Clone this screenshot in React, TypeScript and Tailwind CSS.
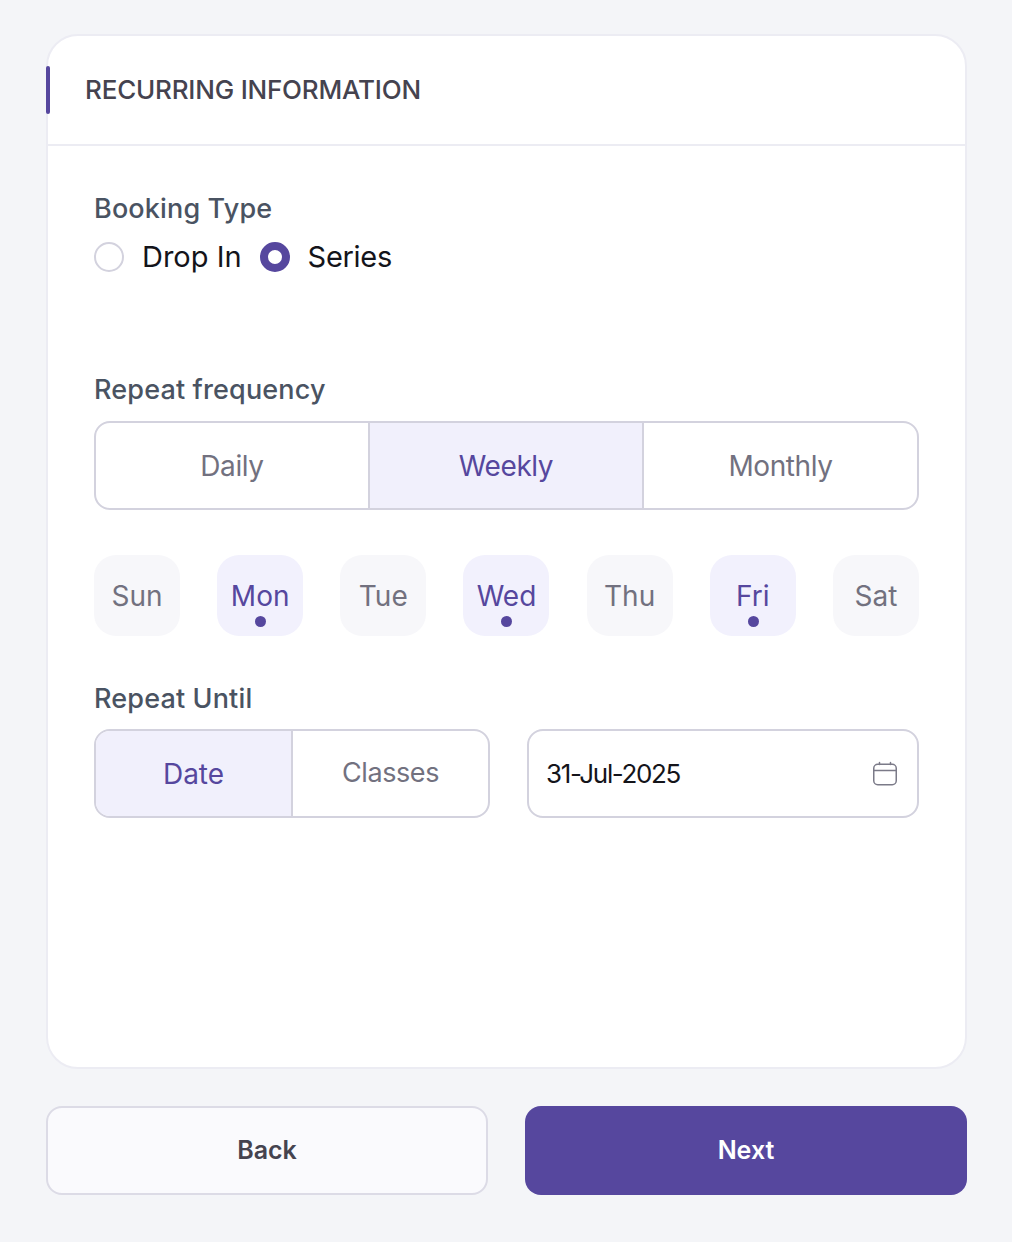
const DAYS = [
  { label: 'Sun', on: false },
  { label: 'Mon', on: true },
  { label: 'Tue', on: false },
  { label: 'Wed', on: true },
  { label: 'Thu', on: false },
  { label: 'Fri', on: true },
  { label: 'Sat', on: false },
];

function CalendarIcon() {
  return (
    <svg width="26" height="26" viewBox="0 0 26 26" fill="none" stroke="#7b7a88" strokeWidth="1.5" strokeLinecap="round">
      <rect x="1.75" y="3.25" width="22.5" height="20.5" rx="4" />
      <path d="M2 9.5h22M7.5 1.5v2M18.5 1.5v2" />
    </svg>
  );
}

function Segment({ label, active, className }: { label: string; active?: boolean; className: string }) {
  return (
    <div
      className={
        active
          ? `flex items-center justify-center bg-[#f1f0fc] text-[#56479e] ${className}`
          : `flex items-center justify-center text-[#72717f] ${className}`
      }
    >
      {label}
    </div>
  );
}

function Label({ children }: { children: string }) {
  return <div className="text-[27px] leading-[36px] font-medium text-[#4a5362] tracking-[0.15px]">{children}</div>;
}

export default function App() {
  return (
    <div className="w-[1012px] h-[1242px] bg-[#f4f5f8] pl-[46px] pr-[45px] pt-[34px] text-[30px] font-['Inter',sans-serif]">
      <div className="h-[1035px] bg-white rounded-[32px] border-2 border-[#eceCf3]">
        <div className="relative h-[110px] border-b-2 border-[#eceCf3] flex items-center pl-[37px] pb-[2px]">
          <div className="absolute left-[-2px] top-[30px] w-[4px] h-[48px] rounded-[2px] bg-[#56479e]" />
          <span className="text-[26px] font-medium text-[#45434f] tracking-[-0.2px]">RECURRING INFORMATION</span>
        </div>

        <div className="px-[46px]">
          <div className="pt-[45px]">
            <Label>Booking Type</Label>
            <div className="flex items-center h-[30px] mt-[15px] text-[#14141a] text-[29px] leading-[30px]">
              <div className="w-[30px] h-[30px] rounded-full border-2 border-[#d3d2de] bg-white" />
              <span className="ml-[18px]">Drop In</span>
              <div className="ml-[18px] w-[30px] h-[30px] rounded-full border-[8px] border-[#56479e] bg-white" />
              <span className="ml-[18px] tracking-[-0.3px]">Series</span>
            </div>
          </div>

          <div className="mt-[100px]">
            <Label>Repeat frequency</Label>
          </div>
          <div className="mt-[13px] grid grid-cols-[272px_276px_1fr] h-[89px] rounded-[16px] border-2 border-[#d3d2de] overflow-hidden text-[28px] tracking-[-0.4px]">
            <Segment label="Daily" className="" />
            <Segment label="Weekly" active className="border-x-2 border-[#d3d2de]" />
            <Segment label="Monthly" className="" />
          </div>

          <div className="mt-[45px] flex justify-between">
            {DAYS.map((d) => (
              <div
                key={d.label}
                className={
                  d.on
                    ? 'relative w-[86px] h-[81px] rounded-[22px] bg-[#f2f1fd] text-[#56479e] text-[28px] flex items-center justify-center'
                    : 'relative w-[86px] h-[81px] rounded-[22px] bg-[#f7f7fa] text-[#72717f] text-[28px] flex items-center justify-center'
                }
              >
                {d.label}
                {d.on && <div className="absolute left-[38px] bottom-[9px] w-[11px] h-[11px] rounded-full bg-[#56479e]" />}
              </div>
            ))}
          </div>

          <div className="mt-[45px]">
            <Label>Repeat Until</Label>
          </div>
          <div className="mt-[12px] flex justify-between">
            <div className="w-[396px] h-[89px] rounded-[16px] border-2 border-[#d3d2de] overflow-hidden flex text-[28px]">
              <Segment label="Date" active className="w-[197px] border-r-2 border-[#d3d2de]" />
              <Segment label="Classes" className="flex-1 text-[27px] tracking-[-0.4px]" />
            </div>
            <div className="w-[392px] h-[89px] rounded-[16px] border-2 border-[#d3d2de] flex items-center justify-between pl-[17px] pr-[19px]">
              <span className="text-[26px] tracking-[-1.35px] text-[#14141a]">31-Jul-2025</span>
              <CalendarIcon />
            </div>
          </div>
        </div>
      </div>

      <div className="mt-[37px] flex justify-between text-[25px] font-semibold">
        <button className="w-[442px] h-[89px] pt-[1px] rounded-[16px] border-2 border-[#dcdbe6] bg-[#fafafd] text-[#45434f]">Back</button>
        <button className="w-[442px] h-[89px] pt-[1px] rounded-[16px] bg-[#56479e] text-white">Next</button>
      </div>
    </div>
  );
}
